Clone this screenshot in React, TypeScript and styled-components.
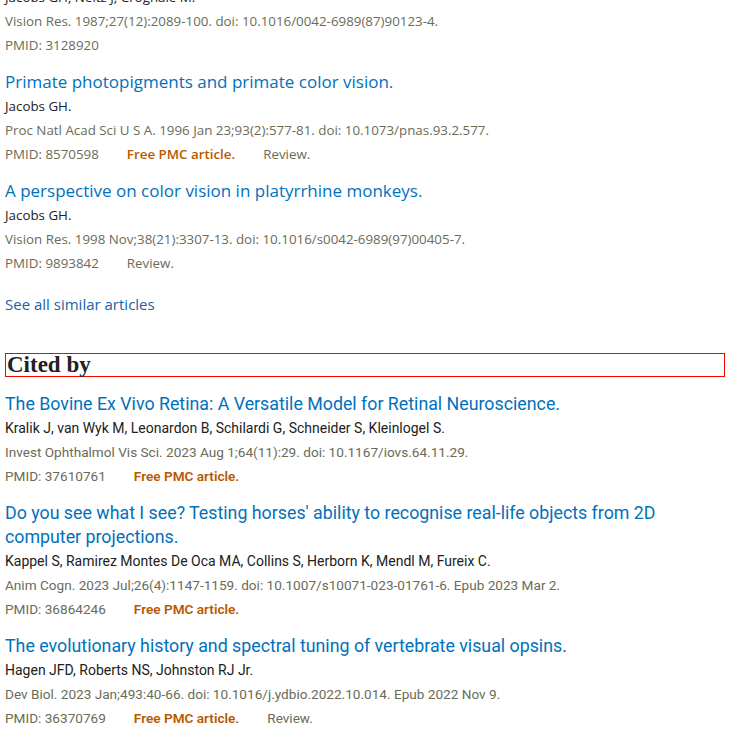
import React from "react";
import styled, { createGlobalStyle } from "styled-components";

type Article = {
  title: string;
  authors: string;
  citation: string;
  pmid: string;
  free?: boolean;
  review?: boolean;
};

const similar: Article[] = [
  {
    title: "Primate photopigments and primate color vision.",
    authors: "Jacobs GH.",
    citation: "Proc Natl Acad Sci U S A. 1996 Jan 23;93(2):577-81. doi: 10.1073/pnas.93.2.577.",
    pmid: "8570598",
    free: true,
    review: true,
  },
  {
    title: "A perspective on color vision in platyrrhine monkeys.",
    authors: "Jacobs GH.",
    citation: "Vision Res. 1998 Nov;38(21):3307-13. doi: 10.1016/s0042-6989(97)00405-7.",
    pmid: "9893842",
    review: true,
  },
];

const citedBy: Article[] = [
  {
    title: "The Bovine Ex Vivo Retina: A Versatile Model for Retinal Neuroscience.",
    authors: "Kralik J, van Wyk M, Leonardon B, Schilardi G, Schneider S, Kleinlogel S.",
    citation: "Invest Ophthalmol Vis Sci. 2023 Aug 1;64(11):29. doi: 10.1167/iovs.64.11.29.",
    pmid: "37610761",
    free: true,
  },
  {
    title:
      "Do you see what I see? Testing horses' ability to recognise real-life objects from 2D computer projections.",
    authors: "Kappel S, Ramirez Montes De Oca MA, Collins S, Herborn K, Mendl M, Fureix C.",
    citation: "Anim Cogn. 2023 Jul;26(4):1147-1159. doi: 10.1007/s10071-023-01761-6. Epub 2023 Mar 2.",
    pmid: "36864246",
    free: true,
  },
  {
    title: "The evolutionary history and spectral tuning of vertebrate visual opsins.",
    authors: "Hagen JFD, Roberts NS, Johnston RJ Jr.",
    citation: "Dev Biol. 2023 Jan;493:40-66. doi: 10.1016/j.ydbio.2022.10.014. Epub 2022 Nov 9.",
    pmid: "36370769",
    free: true,
    review: true,
  },
];

const GlobalStyle = createGlobalStyle`
  body {
    margin: 0;
    background: #fff;
    font-family: "Open Sans", "Noto Sans", sans-serif;
    overflow: hidden;
  }
`;

const Page = styled.div`
  padding: 0 5px;
  width: 720px;
  margin-top: -15px;
`;

// the "Cited by" list is set in a narrower face than the similar-articles list
const Section = styled.section<{ $narrow?: boolean }>`
  font-family: ${(p) => (p.$narrow ? '"Roboto", sans-serif' : '"Open Sans", "Noto Sans", sans-serif')};
  --title-size: ${(p) => (p.$narrow ? "17.8px" : "17px")};
  --authors-size: ${(p) => (p.$narrow ? "14px" : "13.35px")};
  --small-size: ${(p) => (p.$narrow ? "13.6px" : "13.35px")};
  --gap: 13px;
`;

const Item = styled.div`
  margin-top: var(--gap);
  &:first-child {
    margin-top: 0;
  }
`;

const Title = styled.a`
  display: block;
  color: #0071bc;
  font-size: var(--title-size);
  line-height: 24px;
  text-decoration: none;
`;

const Line = styled.div<{ $tone: "authors" | "journal" }>`
  font-size: ${(p) => (p.$tone === "authors" ? "var(--authors-size)" : "var(--small-size)")};
  line-height: 24px;
  color: ${(p) => (p.$tone === "authors" ? "#212121" : "#6a6c57")};
  white-space: nowrap;
`;

const Meta = styled.div`
  display: flex;
  gap: 28px;
  font-size: var(--small-size);
  line-height: 24px;
  color: #6a6c57;
`;

const Free = styled.span`
  color: #b85800;
  font-weight: 600;
`;

const SeeAll = styled.a`
  display: block;
  margin-top: 17px;
  color: #2061a8;
  font-size: 15px;
  line-height: 24px;
  text-decoration: none;
`;

const Heading = styled.h2`
  margin: 37px 0 15px;
  padding: 0 1px;
  border: 1px solid red;
  font-family: "Liberation Serif", "DejaVu Serif", serif;
  font-size: 23px;
  font-weight: bold;
  line-height: 22px;
  color: #212121;
`;

const ArticleItem: React.FC<{ a: Article }> = ({ a }) => (
  <Item>
    <Title href="#">{a.title}</Title>
    <Line $tone="authors">{a.authors}</Line>
    <Line $tone="journal">{a.citation}</Line>
    <Meta>
      <span>PMID: {a.pmid}</span>
      {a.free && <Free>Free PMC article.</Free>}
      {a.review && <span>Review.</span>}
    </Meta>
  </Item>
);

export default function App() {
  return (
    <>
      <GlobalStyle />
      <Page>
        <Section>
          <Item>
            <Line $tone="authors">Jacobs GH, Neitz J, Crognale M.</Line>
            <Line $tone="journal">Vision Res. 1987;27(12):2089-100. doi: 10.1016/0042-6989(87)90123-4.</Line>
            <Meta>
              <span>PMID: 3128920</span>
            </Meta>
          </Item>
          {similar.map((a) => (
            <ArticleItem key={a.pmid} a={a} />
          ))}
          <SeeAll href="#">See all similar articles</SeeAll>
        </Section>
        <Heading>Cited by</Heading>
        <Section $narrow>
          {citedBy.map((a) => (
            <ArticleItem key={a.pmid} a={a} />
          ))}
        </Section>
      </Page>
    </>
  );
}
